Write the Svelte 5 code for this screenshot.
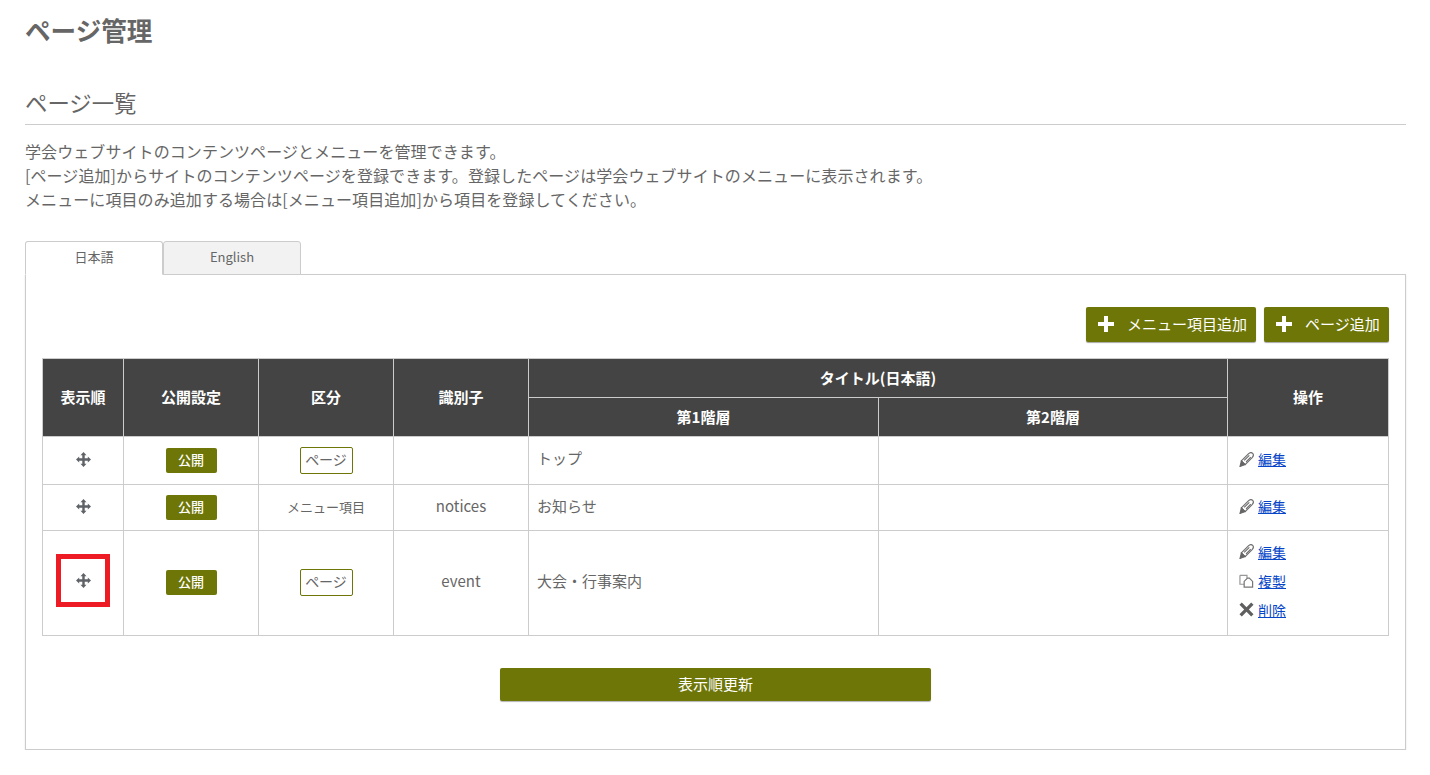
<script>
	const rows = [
		{ kind: 'page', id: '', title: 'トップ', actions: ['edit'], cls: 'r1' },
		{ kind: 'menu', id: 'notices', title: 'お知らせ', actions: ['edit'], cls: 'r2' },
		{ kind: 'page', id: 'event', title: '大会・行事案内', actions: ['edit', 'copy', 'delete'], cls: 'r3', marked: true }
	];
	const labels = { edit: '編集', copy: '複製', delete: '削除' };
</script>

{#snippet plus()}
	<svg class="plus" viewBox="0 0 16 16" width="16" height="16" aria-hidden="true">
		<path d="M6 0h4v6h6v4h-6v6H6v-6H0V6h6z" fill="#fff" />
	</svg>
{/snippet}

{#snippet move()}
	<svg class="move" viewBox="0 0 16 16" width="15" height="15" aria-hidden="true">
		<path d="M8 0l3.200 3.400H9.300v3.300h3.300V4.800L16 8l-3.400 3.200V9.300H9.300v3.300h1.900L8 16l-3.200-3.400h1.900V9.300H3.400v1.900L0 8l3.400-3.200v1.900h3.300V3.400H4.800z" fill="#5f6368" />
	</svg>
{/snippet}

<main class="page">
	<h1>ページ管理</h1>
	<h2>ページ一覧</h2>
	<p class="intro">
		学会ウェブサイトのコンテンツページとメニューを管理できます。<br />
		[ページ追加]からサイトのコンテンツページを登録できます。登録したページは学会ウェブサイトのメニューに表示されます。<br />
		メニューに項目のみ追加する場合は[メニュー項目追加]から項目を登録してください。
	</p>

	<div class="tabs">
		<div class="tab active">日本語</div>
		<div class="tab">English</div>
	</div>

	<section class="panel">
		<div class="toolbar">
			<button class="add wide">{@render plus()}<span>メニュー項目追加</span></button>
			<button class="add narrow">{@render plus()}<span>ページ追加</span></button>
		</div>

		<table>
			<colgroup>
				<col class="c-order" />
				<col class="c-mid" />
				<col class="c-mid" />
				<col class="c-mid" />
				<col class="c-first" />
				<col class="c-second" />
				<col class="c-ops" />
			</colgroup>
			<thead>
				<tr>
					<th rowspan="2">表示順</th>
					<th rowspan="2">公開設定</th>
					<th rowspan="2">区分</th>
					<th rowspan="2">識別子</th>
					<th colspan="2">タイトル(日本語)</th>
					<th rowspan="2">操作</th>
				</tr>
				<tr>
					<th>第1階層</th>
					<th>第2階層</th>
				</tr>
			</thead>
			<tbody>
				{#each rows as row}
					<tr class={row.cls}>
						<td class="center">
							{#if row.marked}
								<span class="marker">{@render move()}</span>
							{:else}
								{@render move()}
							{/if}
						</td>
						<td class="center"><span class="badge">公開</span></td>
						<td class="center">
							{#if row.kind === 'page'}
								<span class="kind">ページ</span>
							{:else}
								<span class="kind-text">メニュー項目</span>
							{/if}
						</td>
						<td class="center">{row.id}</td>
						<td>{row.title}</td>
						<td></td>
						<td class="ops">
							{#each row.actions as action}
								<div class="op">
									{#if action === 'edit'}
										<svg viewBox="0 0 16 16" width="15" height="15" aria-hidden="true">
											<path d="M2.500 9.500L10 2c1.500-1.400 3.500-1.500 4.500-.5s.9 3-.5 4.500L6.500 13.500z" fill="none" stroke="#707070" stroke-width="1.300" />
											<path d="M2.500 9.500l4 4-5.500 2zM5.500 9l5.500-5.500M7.500 10.500l5-5" fill="#666" stroke="#666" stroke-width="1.100" />
										</svg>
									{:else if action === 'copy'}
										<svg viewBox="0 0 16 16" width="15" height="15" aria-hidden="true">
											<path d="M1 2.500h7.500v3M1 2.500v9.500h4.500" fill="none" stroke="#999" stroke-width="1.300" />
											<path d="M9 5.500h2l3.500 3.500v6h-9V9z" fill="#fff" stroke="#777" stroke-width="1.300" />
										</svg>
									{:else}
										<svg viewBox="0 0 16 16" width="15" height="15" aria-hidden="true">
											<path d="M3 .5L8 5.500 13 .5 15.500 3 10.500 8 15.500 13 13 15.500 8 10.500 3 15.500 .5 13 5.500 8 .5 3z" fill="#5f5f5f" />
										</svg>
									{/if}
									<a href="#top">{labels[action]}</a>
								</div>
							{/each}
						</td>
					</tr>
				{/each}
			</tbody>
		</table>

		<div class="update"><button>表示順更新</button></div>
	</section>
</main>

<style>
	:global(body) {
		background: #fff;
		font-family: "Noto Sans CJK JP", "Noto Sans", sans-serif;
		color: #666;
	}

	.page {
		padding: 0 24px 0 25px;
	}

	h1 {
		margin: 0;
		padding-top: 12px;
		font-size: 25.6px;
		line-height: 36px;
		font-weight: 700;
		color: #666;
	}

	h2 {
		margin: 39px 0 0;
		padding-bottom: 7px;
		font-size: 22.4px;
		line-height: 30px;
		font-weight: 400;
		color: #666;
		border-bottom: 1px solid #ccc;
	}

	.intro {
		margin: 14px 0 0;
		font-size: 16px;
		line-height: 24px;
		letter-spacing: 0.08px;
	}

	.tabs {
		display: flex;
		margin-top: 30px;
		margin-bottom: -1px;
		position: relative;
	}

	.tab {
		width: 136px;
		height: 32px;
		border: 1px solid #ccc;
		border-radius: 3px 3px 0 0;
		background: #f2f2f2;
		font-size: 13px;
		line-height: 30px;
		text-align: center;
	}

	.tab.active {
		background: #fff;
		border-bottom-color: #fff;
	}

	.panel {
		height: 474px;
		border: 1px solid #ccc;
		box-shadow: 0 1px 2px rgba(0, 0, 0, 0.1);
		padding: 0 16px;
	}

	.toolbar {
		display: flex;
		justify-content: flex-end;
		gap: 8px;
		padding-top: 32px;
	}

	.add {
		display: flex;
		align-items: center;
		height: 35px;
		padding: 0 8px 2px 12px;
		border: none;
		border-radius: 2px;
		background: #6e7607;
		box-shadow: 0 1px 1px rgba(0, 0, 0, 0.35);
		color: #fff;
		font: inherit;
		font-size: 15px;
	}

	.add.wide {
		width: 170px;
	}

	.add.narrow {
		width: 125px;
	}

	.add span {
		margin-left: 13px;
		white-space: nowrap;
	}

	table {
		width: 1346px;
		margin-top: 16px;
		border-collapse: collapse;
		table-layout: fixed;
		font-size: 15px;
	}

	.c-order {
		width: 81px;
	}

	.c-mid {
		width: 135px;
	}

	.c-first {
		width: 350px;
	}

	.c-second {
		width: 349px;
	}

	.c-ops {
		width: 161px;
	}

	th,
	td {
		border: 1px solid #ccc;
		padding: 0 8px;
		box-sizing: border-box;
	}

	th {
		height: 39px;
		padding-bottom: 2px;
		background: #444;
		color: #fff;
		font-size: 15px;
		font-weight: 700;
		text-align: center;
	}

	.center {
		text-align: center;
	}

	.r1 td {
		height: 48px;
		padding-bottom: 7px;
	}

	.r2 td {
		height: 46px;
		padding-bottom: 4px;
	}

	.r3 td {
		height: 105px;
		padding-bottom: 6px;
	}

	.r1 td.ops,
	.r2 td.ops {
		padding: 0 0 3px 11px;
	}

	.r3 td.ops {
		padding: 0 0 5px 11px;
	}

	.move {
		display: inline-block;
		vertical-align: middle;
	}

	.r2 .move {
		margin-bottom: 2px;
	}

	.marker {
		display: flex;
		align-items: center;
		justify-content: center;
		box-sizing: border-box;
		width: 54px;
		height: 53px;
		margin: 0 auto;
		border: 5px solid #ed1c24;
	}

	.badge {
		display: inline-block;
		width: 51px;
		height: 25px;
		margin-top: 4px;
		border-radius: 2px;
		background: #6e7607;
		color: #fff;
		font-size: 13px;
		font-weight: 500;
		line-height: 23px;
		vertical-align: middle;
	}

	.kind {
		display: inline-block;
		box-sizing: border-box;
		width: 53px;
		height: 27px;
		margin-top: 4px;
		border: 1px solid #6e7607;
		border-radius: 2px;
		font-size: 14px;
		line-height: 23px;
		vertical-align: middle;
		color: #666;
	}

	.r1 .badge,
	.r1 .kind {
		margin-top: 6px;
	}

	.kind-text {
		font-size: 13px;
	}

	.op {
		display: flex;
		align-items: center;
		gap: 4px;
		height: 29px;
		font-size: 14px;
	}

	.op a {
		color: #0645c8;
		text-decoration: underline;
	}

	.update {
		display: flex;
		justify-content: center;
		margin-top: 32px;
	}

	.update button {
		width: 431px;
		height: 33px;
		padding: 0 0 3px;
		border: none;
		border-radius: 2px;
		background: #6e7607;
		box-shadow: 0 1px 1px rgba(0, 0, 0, 0.3);
		color: #fff;
		font: inherit;
		font-size: 15px;
	}
</style>
